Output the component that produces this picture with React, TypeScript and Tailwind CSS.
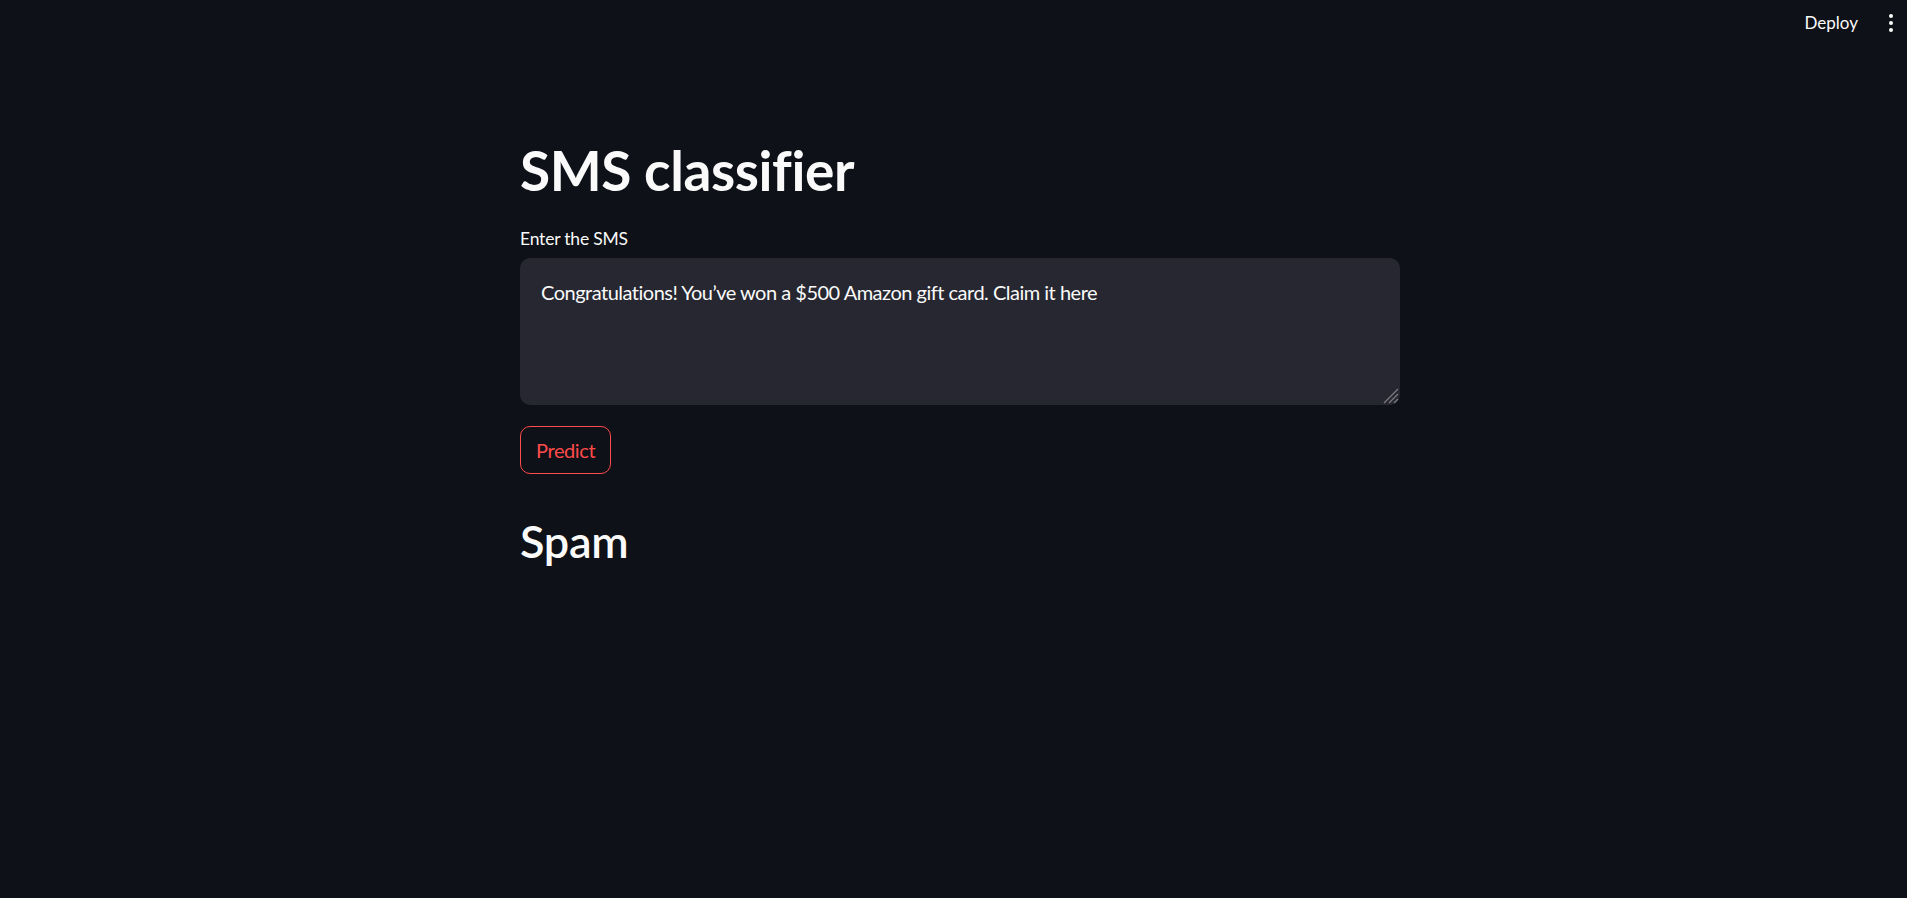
import { useState } from "react";

const font = "font-['Lato','Noto_Sans',sans-serif]";

const App = () => {
  const [sms, setSms] = useState(
    "Congratulations! You\u2019ve won a $500 Amazon gift card. Claim it here"
  );

  return (
    <div className={`min-h-screen bg-[#0e1117] text-[#fafafa] ${font}`}>
      <header className="flex h-[45px] items-center justify-end gap-[25px] pr-[8px]">
        <button className="text-[17px] text-[#fafafa]">Deploy</button>
        <button className="flex h-[24px] w-[16px] flex-col items-center justify-center gap-[3px]">
          <span className="h-[4px] w-[4px] rounded-full bg-[#fafafa]" />
          <span className="h-[4px] w-[4px] rounded-full bg-[#fafafa]" />
          <span className="h-[4px] w-[4px] rounded-full bg-[#fafafa]" />
        </button>
      </header>

      <main className="ml-[520px] w-[880px] pt-[92px]">
        <h1 className="text-[55px] font-bold leading-[1.2] tracking-[-0.4px]">
          SMS classifier
        </h1>

        <label className="mt-[24px] block text-[17.5px] leading-[1.4] tracking-[-0.2px]">
          Enter the SMS
        </label>
        <div className="relative mt-[6px]">
          <textarea
            className="block h-[147px] w-full resize-none rounded-[10px] bg-[#262730] px-[21px] py-[18px] text-[20px] leading-[1.6] tracking-[-0.5px] text-[#fafafa] outline-none"
            value={sms}
            onChange={(e) => setSms(e.target.value)}
          />
          <svg
            className="pointer-events-none absolute bottom-[1px] right-[1px]"
            width="18"
            height="18"
            viewBox="0 0 18 18"
          >
            <path
              d="M17 3 L3 17 M17 8 L8 17 M17 13 L13 17"
              stroke="#7a7a80"
              strokeWidth="1.3"
              fill="none"
            />
          </svg>
        </div>

        <button className="mt-[21px] rounded-[10px] border border-[#ff4b4b] px-[15px] py-[8px] text-[20px] leading-[1.5] tracking-[-0.4px] text-[#ff4b4b]">
          Predict
        </button>

        <h2 className="mt-[40px] text-[45px] font-semibold leading-[1.2] tracking-[-0.3px]">
          Spam
        </h2>
      </main>
    </div>
  );
};

export default App;
